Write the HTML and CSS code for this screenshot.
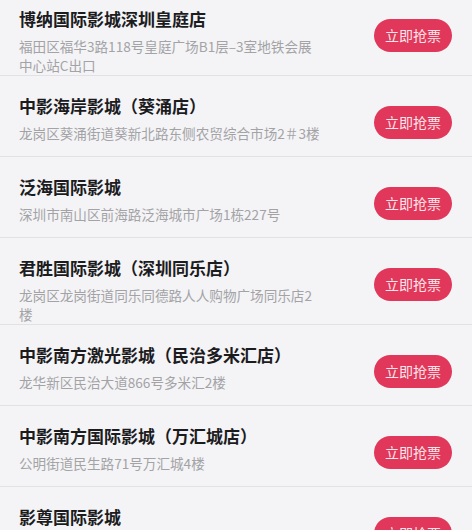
FILE: index.html
```html
<!DOCTYPE html>
<html lang="zh-CN">
<head>
<meta charset="utf-8">
<title>影城列表</title>
<link rel="stylesheet" href="styles.css">
</head>
<body>
<ul class="cinema-list">
  <li class="cinema">
    <div class="info">
      <div class="name">博纳国际影城深圳皇庭店</div>
      <div class="addr">福田区福华3路118号皇庭广场B1层–3室地铁会展中心站C出口</div>
    </div>
    <button class="buy">立即抢票</button>
  </li>
  <li class="cinema">
    <div class="info">
      <div class="name">中影海岸影城（葵涌店）</div>
      <div class="addr">龙岗区葵涌街道葵新北路东侧农贸综合市场2＃3楼</div>
    </div>
    <button class="buy">立即抢票</button>
  </li>
  <li class="cinema">
    <div class="info">
      <div class="name">泛海国际影城</div>
      <div class="addr">深圳市南山区前海路泛海城市广场1栋227号</div>
    </div>
    <button class="buy">立即抢票</button>
  </li>
  <li class="cinema">
    <div class="info">
      <div class="name">君胜国际影城（深圳同乐店）</div>
      <div class="addr">龙岗区龙岗街道同乐同德路人人购物广场同乐店2楼</div>
    </div>
    <button class="buy">立即抢票</button>
  </li>
  <li class="cinema">
    <div class="info">
      <div class="name">中影南方激光影城（民治多米汇店）</div>
      <div class="addr">龙华新区民治大道866号多米汇2楼</div>
    </div>
    <button class="buy">立即抢票</button>
  </li>
  <li class="cinema">
    <div class="info">
      <div class="name">中影南方国际影城（万汇城店）</div>
      <div class="addr">公明街道民生路71号万汇城4楼</div>
    </div>
    <button class="buy">立即抢票</button>
  </li>
  <li class="cinema">
    <div class="info">
      <div class="name">影尊国际影城</div>
      <div class="addr">宝安区新安街道建安一路</div>
    </div>
    <button class="buy">立即抢票</button>
  </li>
</ul>
</body>
</html>
```

FILE: styles.css
```css
html, body {
  margin: 0;
  padding: 0;
  background: #f4f4f6;
  font-family: "Noto Sans CJK SC", "Noto Sans", sans-serif;
  overflow: hidden;
}

.cinema-list {
  list-style: none;
  margin: -11px 0 0 0;
  padding: 0;
}

.cinema {
  display: flex;
  align-items: flex-start;
  box-sizing: border-box;
  min-height: 81px;
  padding: 18px 20px 0 19px;
  border-bottom: 1px solid #e2e2e5;
}

.info {
  width: 303px;
}

.name {
  font-size: 17px;
  font-weight: bold;
  line-height: 24px;
  color: #1c1c1e;
}

.addr {
  margin-top: 6px;
  font-size: 13.6px;
  line-height: 19px;
  color: #a3a3a6;
}

.buy {
  margin-left: auto;
  margin-top: 12px;
  width: 78px;
  height: 33px;
  border: none;
  border-radius: 17px;
  background: #e0375b;
  color: #fde6ea;
  font-family: "Noto Sans CJK SC", sans-serif;
  font-size: 14px;
  padding: 0;
  line-height: 33px;
}
```
